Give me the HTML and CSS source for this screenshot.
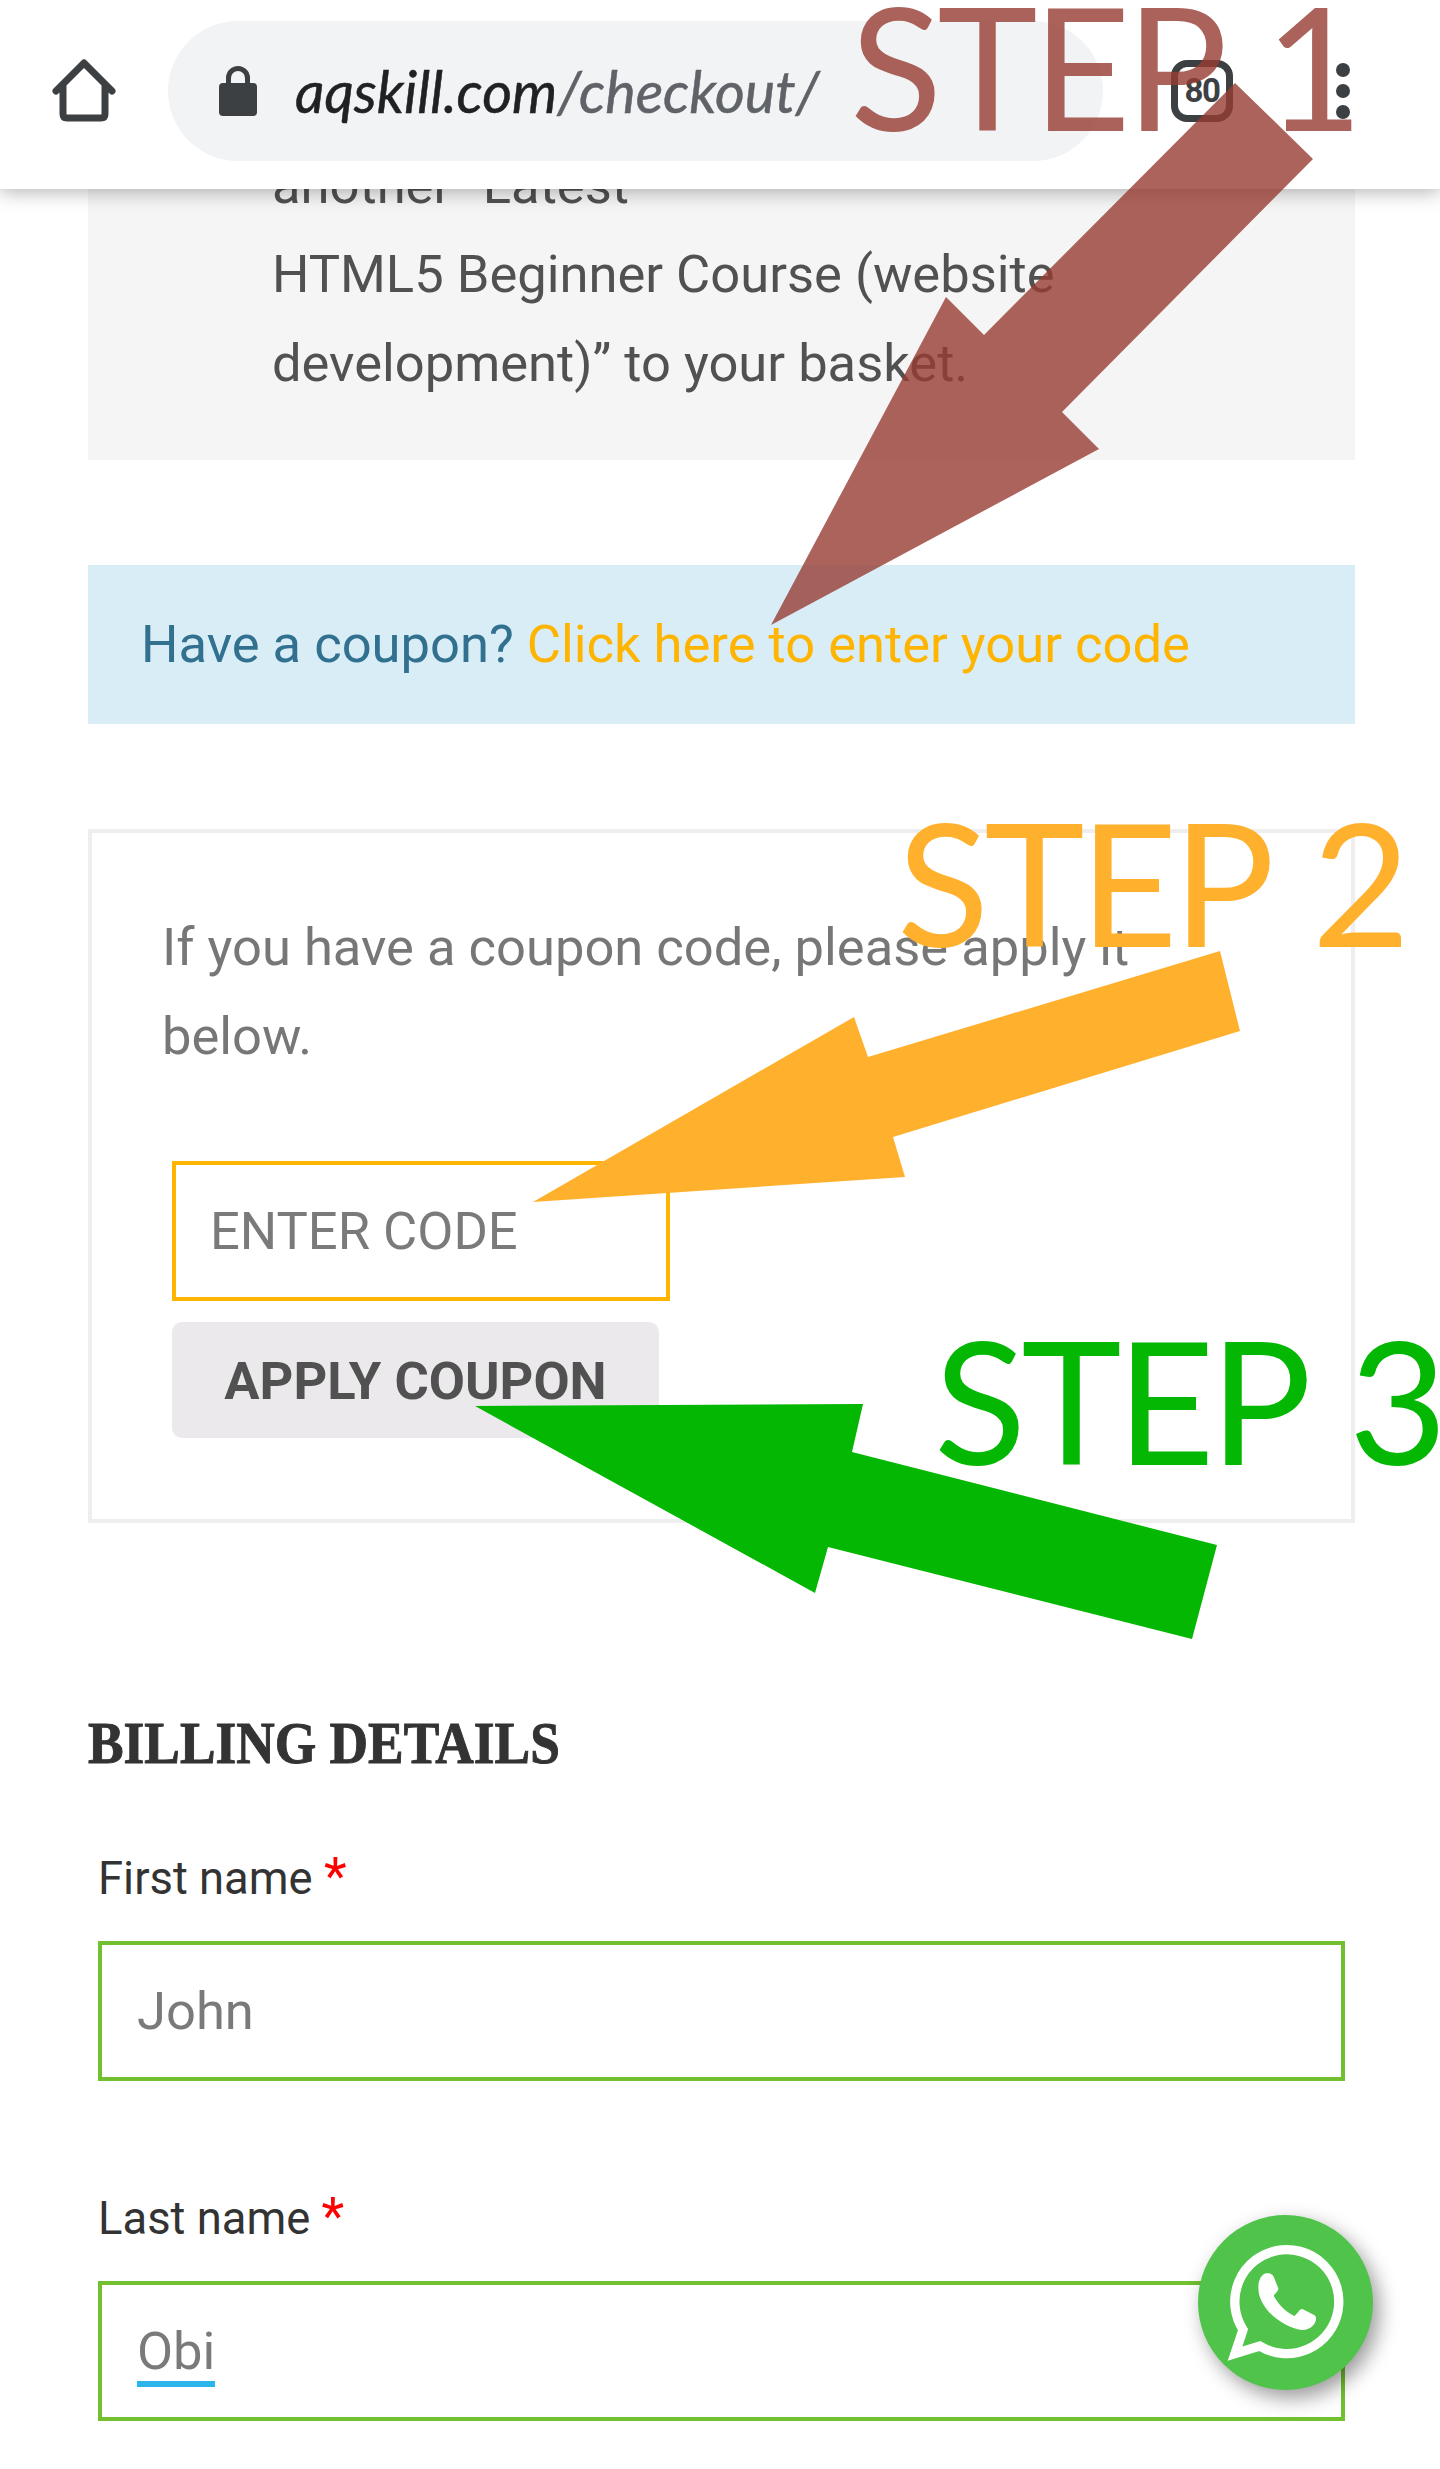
FILE: index.html
```html
<!DOCTYPE html>
<html lang="en">
<head>
  <meta charset="UTF-8" />
  <meta name="viewport" content="width=device-width, initial-scale=1.0"/>
  <title>Checkout - aqskill.com</title>
  <link rel="stylesheet" href="styles.css">
</head>
<body>
  <header class="browser-bar">
    <svg class="home-icon" viewBox="0 0 64 64" aria-hidden="true">
      <path d="M4 32 L32 4 L60 32 M11 26 V55 Q11 59 15 59 H49 Q53 59 53 55 V26"/>
    </svg>
    <div class="address-pill">
      <svg class="lock-icon" viewBox="0 0 38 50" aria-hidden="true">
        <path d="M9.5 18 V12 a9.5 9.5 0 0 1 19 0 V18" class="lock-shackle"/>
        <rect x="0" y="17" width="38" height="33" rx="4"/>
      </svg>
      <span class="url"><span class="url-host">aqskill.com</span>/checkout/</span>
    </div>
    <div class="tab-count">80</div>
    <div class="menu-dots"><i></i><i></i><i></i></div>
  </header>

  <main class="page">
    <div class="notice">another “Latest<br>HTML5 Beginner Course (website development)” to your basket.</div>

    <div class="coupon-info">Have a coupon? <a href="#" class="coupon-link">Click here to enter your code</a></div>

    <form class="coupon-box">
      <p>If you have a coupon code, please apply it below.</p>
      <input type="text" class="coupon-input" placeholder="ENTER CODE">
      <button type="button" class="coupon-button">APPLY COUPON</button>
    </form>

    <h3 class="billing-title">BILLING DETAILS</h3>

    <div class="field">
      <label>First name <span class="required">*</span></label>
      <input type="text" class="field-input" placeholder="John">
    </div>
    <div class="field">
      <label>Last name <span class="required">*</span></label>
      <div class="field-input"><span class="typed">Obi</span></div>
    </div>
  </main>

  <a href="#" class="whatsapp">
    <svg viewBox="115 108 525 525" aria-hidden="true">
      <path class="wa-ring" d="M250 452 L226 524 L300 501 A156 156 0 1 0 250 452 Z"/>
      <path class="wa-phone" d="M322 283 C332 283 339 286 342 293 L356 328 C357 335 346 343 342 350 C355 375 378 398 404 411 C412 406 420 389 428 390 L465 409 C472 415 470 428 462 437 C453 448 440 453 428 453 C395 450 350 425 322 392 C305 370 296 350 296 325 C296 305 305 283 322 283 Z"/>
    </svg>
  </a>

  <!-- annotations drawn over the screenshot -->
  <svg class="arrows" viewBox="0 0 1440 2469" aria-hidden="true">
    <polygon class="arrow-1" points="1235,83 1313,159 1062,412 1099,449 771,625 946,297 984,335"/>
    <polygon class="arrow-2" points="1220,951 1240,1031 893,1137 905,1177 533,1202 854,1017 868,1057"/>
    <polygon class="arrow-3" points="475,1406 863,1404 852,1452 1217,1545 1192,1639 828,1547 815,1593"/>
  </svg>
  <div class="step step-1">STEP 1</div>
  <div class="step step-2">STEP 2</div>
  <div class="step step-3">STEP 3</div>
</body>
</html>
```

FILE: styles.css
```css
html, body {
  margin: 0;
  height: 2469px;
  overflow: hidden;
  background: white;
}
body {
  font-family: Roboto, Arial, sans-serif;
  font-size: 52.5px;
  line-height: 89px;
  color: #515151;
  position: relative;
}

/* browser chrome */
.browser-bar {
  position: absolute;
  top: 0;
  left: 0;
  right: 0;
  height: 189px;
  box-sizing: border-box;
  padding-bottom: 7px;
  background: white;
  box-shadow: 0 3px 18px rgba(0,0,0,0.3);
  display: flex;
  align-items: center;
  z-index: 2;
}
.home-icon {
  width: 64px;
  height: 64px;
  margin-left: 52px;
  margin-right: 52px;
  fill: none;
  stroke: #3c4043;
  stroke-width: 7;
  stroke-linecap: round;
  stroke-linejoin: round;
}
.address-pill {
  width: 935px;
  height: 140px;
  box-sizing: border-box;
  padding-left: 51px;
  border-radius: 70px;
  background: #f1f3f4;
  display: flex;
  align-items: center;
}
.lock-icon {
  width: 38px;
  height: 50px;
  fill: #3c4043;
  margin-right: 38px;
}
.lock-shackle {
  fill: none;
  stroke: #3c4043;
  stroke-width: 5;
}
.url {
  font-family: "Lato", sans-serif;
  font-style: italic;
  font-size: 57.5px;
  line-height: 1;
  color: #5f6368;
  -webkit-text-stroke: 0.5px currentColor;
}
.url-host {
  color: #202124;
}
.tab-count {
  width: 62px;
  height: 62px;
  box-sizing: border-box;
  margin-left: 68px;
  border: 7px solid #3c4043;
  border-radius: 16px;
  font-family: Roboto, sans-serif;
  font-weight: bold;
  font-size: 33px;
  letter-spacing: -1.5px;
  line-height: 48px;
  text-align: center;
  color: #3c4043;
}
.menu-dots {
  margin-left: 103px;
  display: flex;
  flex-direction: column;
  gap: 7px;
}
.menu-dots i {
  display: block;
  width: 14px;
  height: 14px;
  border-radius: 50%;
  background: #3c4043;
}

/* page */
.page {
  padding: 100px 85px 0 88px;
}
.notice {
  padding: 41px 180px 52px 184px;
  background: #f5f5f5;
}
.coupon-info {
  margin-top: 105px;
  padding: 35px 53px;
  background: #d9edf7;
  color: #31708f;
}
.coupon-link {
  color: #ffb400;
  text-decoration: none;
}
.coupon-box {
  margin-top: 105px;
  padding: 70px 70px 81px;
  border: 4px solid #eeeeee;
  color: #777;
}
.coupon-box p {
  margin: 0 0 80px;
  padding-right: 130px;
}
.coupon-input {
  display: block;
  width: 498px;
  height: 140px;
  box-sizing: border-box;
  margin-left: 10px;
  padding: 0 34px;
  border: 4px solid #ffb400;
  outline: none;
  font-family: Roboto, Arial, sans-serif;
  font-size: 52.5px;
  background: white;
}
.coupon-button {
  display: block;
  width: 487px;
  height: 116px;
  margin: 21px 0 0 10px;
  padding: 2px 0 0;
  border: none;
  border-radius: 10px;
  background: #ebe9eb;
  color: #515151;
  font-family: Roboto, Arial, sans-serif;
  font-weight: bold;
  font-size: 52.5px;
}
input::placeholder {
  color: #7a7a7a;
  opacity: 1;
}
.billing-title {
  margin: 176px 0 0;
  font-family: "Liberation Serif", serif;
  font-weight: bold;
  font-size: 60px;
  line-height: 89px;
  white-space: nowrap;
  transform: scaleX(0.889);
  transform-origin: left center;
  -webkit-text-stroke: 1px #333;
  color: #333;
}

/* billing form */
.field {
  padding: 0 10px;
  margin-top: 46px;
}
.field + .field {
  margin-top: 93px;
}
.field label {
  display: block;
  margin-bottom: 18px;
  font-size: 45.4px;
  color: #333;
}
.required {
  color: red;
  font-size: 52.5px;
  line-height: 1;
}
.field-input {
  display: block;
  width: 100%;
  height: 140px;
  box-sizing: border-box;
  padding: 0 35px;
  border: 4px solid #72bf30;
  outline: none;
  background: white;
  font-family: Roboto, Arial, sans-serif;
  font-size: 52.5px;
  line-height: 132px;
  color: #7a7a7a;
}
.typed {
  display: inline-block;
  line-height: 60px;
  border-bottom: 6px solid #2cb5ea;
}

/* floating whatsapp button */
.whatsapp {
  position: absolute;
  left: 1198px;
  top: 2215px;
  width: 175px;
  height: 175px;
  border-radius: 50%;
  background: #4fc34a;
  box-shadow: 6px 8px 20px rgba(0,0,0,0.4);
  z-index: 3;
}
.whatsapp svg {
  display: block;
  width: 175px;
  height: 175px;
}
.wa-ring {
  fill: none;
  stroke: white;
  stroke-width: 28;
  stroke-miterlimit: 10;
}
.wa-phone {
  fill: white;
}

/* annotations */
.arrows {
  position: absolute;
  top: 0;
  left: 0;
  width: 1440px;
  height: 2469px;
  z-index: 4;
}
.arrow-1 {
  fill: #963c32;
  opacity: 0.8;
}
.arrow-2 {
  fill: #ffb12e;
}
.arrow-3 {
  fill: #03b703;
}
.step {
  position: absolute;
  z-index: 5;
  font-family: Lato, sans-serif;
  font-size: 170px;
  letter-spacing: -5px;
  word-spacing: 8px;
  line-height: 130px;
  white-space: nowrap;
}
.step-1 {
  left: 850px;
  top: 0;
  color: #963c32;
  opacity: 0.8;
}
.step-2 {
  left: 897px;
  top: 816px;
  color: #ffb12e;
}
.step-3 {
  left: 934px;
  top: 1334px;
  color: #03b703;
}
```
